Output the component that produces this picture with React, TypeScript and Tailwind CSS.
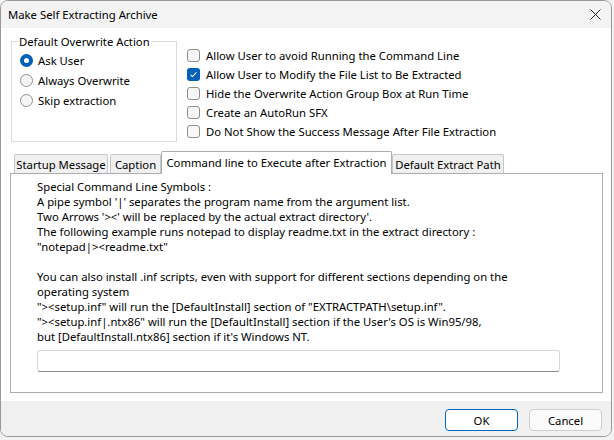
import React from 'react';

const font = { fontFamily: '"Noto Sans", "Open Sans", sans-serif' };

function Radio({ checked, label }: { checked?: boolean; label: string }) {
  return (
    <div className="flex h-[20px] items-center gap-[5px]">
      {checked ? (
        <span className="flex h-[13px] w-[13px] items-center justify-center rounded-full bg-[#005fb8]">
          <span className="h-[5px] w-[5px] rounded-full bg-white" />
        </span>
      ) : (
        <span className="h-[13px] w-[13px] rounded-full border border-[#8f8f8f] bg-[#f5f5f5]" />
      )}
      <span>{label}</span>
    </div>
  );
}

function Check({ checked, label }: { checked?: boolean; label: string }) {
  return (
    <div className="flex h-[19px] items-center gap-[6px]">
      {checked ? (
        <span className="flex h-[13px] w-[13px] items-center justify-center rounded-[3px] bg-[#005fb8]">
          <svg width="9" height="9" viewBox="0 0 9 9" fill="none">
            <path d="M1.5 4.8 L3.5 6.6 L7.5 2.4" stroke="white" strokeWidth="1.1" />
          </svg>
        </span>
      ) : (
        <span className="h-[13px] w-[13px] rounded-[3px] border border-[#8f8f8f] bg-[#f7f7f7]" />
      )}
      <span>{label}</span>
    </div>
  );
}

function Tab({ label, w, ml }: { label: string; w: string; ml?: string }) {
  return (
    <div
      className={`flex h-[19px] items-center justify-center whitespace-nowrap rounded-t-[2px] border border-b-0 border-[#c6c6c6] bg-[#f0f0f0] ${w} ${ml ?? ''}`}
    >
      {label}
    </div>
  );
}

export default function App() {
  const lines = [
    'Special Command Line Symbols :',
    "A pipe symbol '|' separates the program name from the argument list.",
    "Two Arrows '><' will be replaced by the actual extract directory'.",
    'The following example runs notepad to display readme.txt in the extract directory :',
    '"notepad|><readme.txt"',
    '\u00a0',
    'You can also install .inf scripts, even with support for different sections depending on the',
    'operating system',
    '"><setup.inf" will run the [DefaultInstall] section of "EXTRACTPATH\\setup.inf".',
    '"><setup.inf|.ntx86" will run the [DefaultInstall] section if the User\'s OS is Win95/98,',
    "but [DefaultInstall.ntx86] section if it's Windows NT.",
  ];

  return (
    <div className="h-[440px] w-[614px] bg-[#f2f2f2] text-[11.3px] leading-[15px] text-black" style={font}>
      <div className="flex h-[437px] w-[612px] flex-col overflow-hidden rounded-[8px] border border-[#999999] bg-white">
        {/* title bar */}
        <div className="flex h-[27px] shrink-0 items-center justify-between bg-[#f3f3f3] pl-[7px] pr-[9px]">
          <span>Make Self Extracting Archive</span>
          <svg width="11" height="11" viewBox="0 0 11 11" className="mr-[1px]">
            <path d="M0.5 0.5 L10.5 10.5 M10.5 0.5 L0.5 10.5" stroke="#222" strokeWidth="1" />
          </svg>
        </div>

        {/* body */}
        <div className="flex h-[373px] flex-col bg-white px-[9px]">
          <div className="flex">
            <div className="relative ml-[1px] mt-[13px] h-[101px] w-[166px] border border-[#dcdcdc] pl-[8px] pt-[8px]">
              <span className="absolute -top-[8px] left-[6px] bg-white px-[1px]">
                Default Overwrite Action
              </span>
              <Radio checked label="Ask User" />
              <Radio label="Always Overwrite" />
              <Radio label="Skip extraction" />
            </div>
            <div className="ml-[10px] mt-[18px] flex flex-col">
              <Check label="Allow User to avoid Running the Command Line" />
              <Check checked label="Allow User to Modify the File List to Be Extracted" />
              <Check label="Hide the Overwrite Action Group Box at Run Time" />
              <Check label="Create an AutoRun SFX" />
              <Check label="Do Not Show the Success Message After File Extraction" />
            </div>
          </div>

          {/* tabs */}
          <div className="ml-[4px] mt-[9px] flex h-[22px] items-end">
            <Tab label="Startup Message" w="w-[94px]" />
            <Tab label="Caption" w="w-[51px]" ml="ml-[2px]" />
            <div className="relative z-10 -mb-[1px] flex h-[23px] w-[231px] items-center justify-center whitespace-nowrap rounded-t-[2px] border border-b-0 border-[#adadad] bg-white pb-[2px]">
              Command line to Execute after Extraction
            </div>
            <Tab label="Default Extract Path" w="w-[112px]" />
          </div>

          {/* panel */}
          <div className="h-[220px] w-[593px] border border-[#adadad] bg-white pl-[26px] pt-[5px]">
            <div>
              {lines.map((l, i) => (
                <div key={i} className="h-[15px] whitespace-pre">{l}</div>
              ))}
            </div>
            <div className="mt-[6px] h-[22px] w-[523px] rounded-[3px] border border-[#d6d6d6] border-b-[#8a8a8a] bg-white" />
          </div>
        </div>

        {/* footer */}
        <div className="flex flex-1 items-start justify-end gap-[11px] bg-[#f0f0f0] pr-[9px] pt-[8px]">
          <button className="h-[22px] w-[73px] rounded-[4px] border border-[#0067c0] bg-white">OK</button>
          <button className="h-[22px] w-[73px] rounded-[4px] border border-[#d0d0d0] bg-[#fbfbfb]">Cancel</button>
        </div>
      </div>
    </div>
  );
}
